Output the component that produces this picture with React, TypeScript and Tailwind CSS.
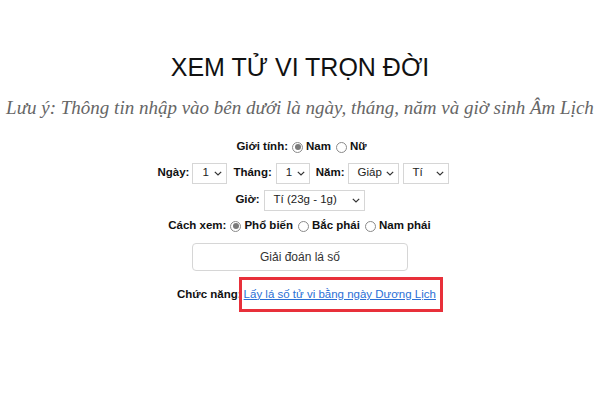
import React from 'react';

const Radio: React.FC<{ checked?: boolean; label: string }> = ({ checked, label }) => (
  <label className="inline-flex items-center gap-[3px] mr-[1px]">
    <span className="w-[11px] h-[11px] rounded-full border border-[#8a8a8a] bg-white flex items-center justify-center">
      {checked && <span className="w-[6px] h-[6px] rounded-full bg-[#7a7a7a]" />}
    </span>
    <span>{label}</span>
  </label>
);

const Select: React.FC<{ value: string; className: string }> = ({ value, className }) => (
  <span
    className={`${className} shrink-0 h-[21px] border border-[#d6d6d6] bg-white flex items-center justify-between pl-[9px] pr-[4px] font-normal text-[11.5px] text-[#222]`}
  >
    <span>{value}</span>
    <svg width="8" height="5" viewBox="0 0 8 5" className="mt-[1px] shrink-0">
      <path d="M0.8 0.8l3.2 3.2L7.2 0.8" fill="none" stroke="#333" strokeWidth="1.2" />
    </svg>
  </span>
);

export default function App() {
  return (
    <div className="w-[600px] h-[400px] bg-white flex flex-col items-center font-['Liberation_Sans',Arial,sans-serif] text-[#111]">
      <h1 className="mt-[52px] text-[25px] leading-[30px] text-[#111]">XEM TỬ VI TRỌN ĐỜI</h1>
      <p className="mt-[14px] font-['Liberation_Serif',serif] italic text-[19px] leading-[24px] text-[#666] whitespace-nowrap">
        Lưu ý: Thông tin nhập vào bên dưới là ngày, tháng, năm và giờ sinh Âm Lịch
      </p>

      <div className="mt-[17px] flex flex-col items-center gap-[6px] text-[11.5px] font-bold">
        <div className="h-[20px] flex items-center gap-[4px] ml-[4px]">
          <span>Giới tính:</span>
          <Radio checked label="Nam" />
          <Radio label="Nữ" />
        </div>
        <div className="h-[20px] flex items-center ml-[6px]">
          <span className="mr-[3px]">Ngày:</span>
          <Select value="1" className="w-[35px]" />
          <span className="ml-[6px] mr-[4px]">Tháng:</span>
          <Select value="1" className="w-[34px]" />
          <span className="ml-[6px] mr-[3px]">Năm:</span>
          <Select value="Giáp" className="w-[51px]" />
          <Select value="Tí" className="w-[46px] ml-[4px]" />
        </div>
        <div className="h-[20px] flex items-center gap-[4px] mt-[1px]">
          <span>Giờ:</span>
          <Select value="Tí (23g - 1g)" className="w-[101px]" />
        </div>
        <div className="h-[20px] flex items-center gap-[4px]">
          <span>Cách xem:</span>
          <Radio checked label="Phổ biến" />
          <Radio label="Bắc phái" />
          <Radio label="Nam phái" />
        </div>
      </div>

      <button className="mt-[7px] w-[216px] h-[28px] border border-[#d6d6d6] rounded-[4px] bg-white text-[12px] text-[#333]">
        Giải đoán lá số
      </button>

      <div className="mt-[6px] ml-[20px] flex items-center text-[11.5px]">
        <span className="font-bold">Chức năng:</span>
        <span className="border-[3px] border-[#e8303a] h-[35px] flex items-center -ml-[3px] pl-[2px] pr-[4px]">
          <a href="#" className="text-[#2a6fd6] underline whitespace-nowrap">Lấy lá số tử vi bằng ngày Dương Lịch</a>
        </span>
      </div>
    </div>
  );
}
